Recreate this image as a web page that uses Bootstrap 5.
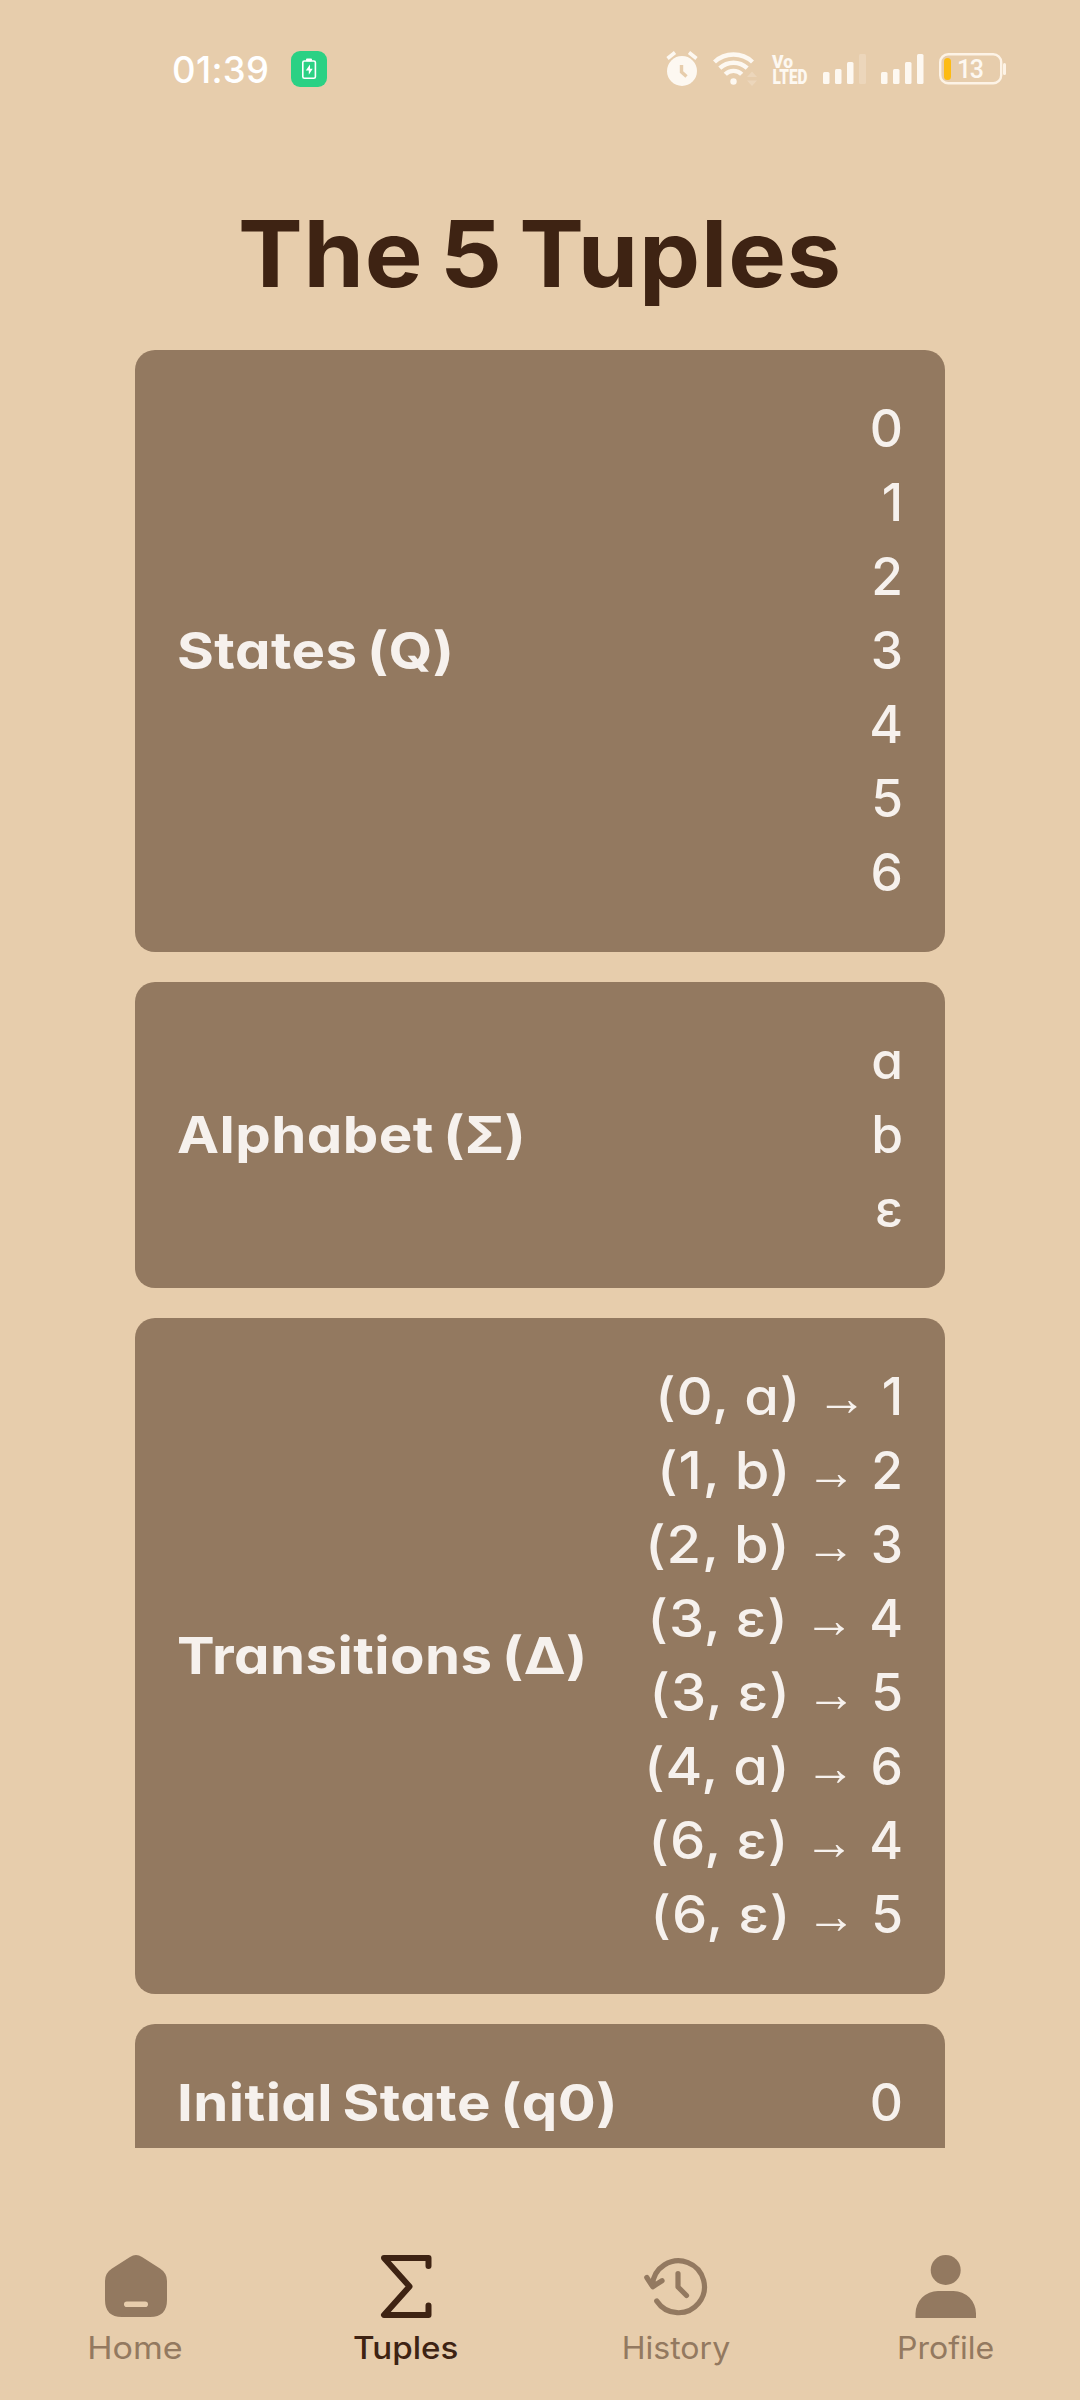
<!DOCTYPE html>
<html lang="en">
<head>
<meta charset="utf-8">
<meta name="viewport" content="width=device-width, initial-scale=1">
<title>The 5 Tuples</title>
<link href="https://cdn.jsdelivr.net/npm/bootstrap@5.3.0/dist/css/bootstrap.min.css" rel="stylesheet">
<style>
:root { --sand: #e7cdac; --brown: #937960; --dark: #3e2313; --cream: #f6f1ed; }
html, body { background: var(--sand); }
body { font-family: Inter, Roboto, sans-serif; font-feature-settings: "cv11"; }
.phone { width: 1080px; height: 2400px; background: var(--sand); }
.status-bar { height: 138px; padding: 33px 73px 33px 172px; color: #fff; }
.clock { font-size: 36.5px; font-weight: 500; line-height: 72px; padding-top: 2px; letter-spacing: .35px; width: 119px; font-feature-settings: normal; }
.status-bar svg { display: block; flex: none; overflow: visible; }
.status-icons { gap: 15px; }
.page-title { color: var(--dark); font-size: 92px; font-weight: 700; line-height: 136px; height: 212px; padding-top: 48px; word-spacing: -7px; letter-spacing: .8px; transform: scaleX(1.055); }
.tuple-list { width: 810px; height: 1798px; gap: 30px; }
.tuple-card { background: var(--brown); color: var(--cream); border-radius: 20px; padding: 41px 42px 43px; font-size: 51.5px; line-height: 74px; flex: none; }
.tuple-name { font-weight: 700; letter-spacing: .4px; word-spacing: -4px; transform: scaleX(1.095); transform-origin: left; }
.tuple-values { font-weight: 500; }
.pair { letter-spacing: .8px; word-spacing: -1px; margin-right: 15px; transform: scaleX(1.09); transform-origin: right; }
.arrow { font-family: "Liberation Sans", sans-serif; font-weight: 400; font-size: 50px; line-height: 0; width: 50px; margin-right: 15px; }
.tab-bar { height: 252px; padding-top: 105px; }
.tab-item { color: var(--brown); font-size: 30.7px; line-height: 40px; text-decoration: none; width: 270px; }
.tab-item span { margin-left: 1px; transform: scaleX(1.045); }
.tab-item .wide-label { transform: scaleX(1.11); margin-left: 0; }
.tab-item.active { color: var(--dark); font-weight: 500; }
.tab-item.active span { transform: scaleX(1.08); }
.tab-item svg { display: block; margin-bottom: 9px; margin-left: 2px; }
</style>
<script src="https://cdn.jsdelivr.net/npm/bootstrap@5.3.0/dist/js/bootstrap.bundle.min.js"></script>
</head>
<body>
<div class="phone d-flex flex-column overflow-hidden">

  <header class="status-bar d-flex align-items-center">
    <div class="clock">01:39</div>
    <svg width="36" height="36" viewBox="0 0 36 36"><rect width="36" height="36" rx="9" fill="#2bd184"/><rect x="11.8" y="10" width="12.6" height="17.3" rx="1.6" fill="none" stroke="#fff" stroke-width="1.6"/><rect x="15" y="7.6" width="6" height="2.6" rx="1" fill="#fff"/><path d="M19 13.600l-4.200 6h3v4.200l3.900-6h-2.700z" fill="#fff"/></svg>
    <div class="status-icons d-flex align-items-center ms-auto">
      <svg width="32" height="36" viewBox="0 0 32 36" fill="#fdf8f1"><circle cx="16" cy="20" r="15"/><path d="M1.500 7.500L9 1.500M30.500 7.500L23 1.500" stroke="#fdf8f1" stroke-width="3.600"/><path d="M15.500 14v7l5 4.500" fill="none" stroke="#e7cdac" stroke-width="3.400"/></svg>
      <svg width="44" height="36" viewBox="0 0 44 36" fill="none" stroke="#fdf8f1" stroke-width="4.400"><path d="M1.500 11A28 28 0 0 1 39.500 11M6.800 17.200A20 20 0 0 1 34.200 17.200M12.300 23.300A11.500 11.500 0 0 1 28.700 23.300"/><circle cx="20.500" cy="30.500" r="3.200" fill="#fdf8f1" stroke="none"/><path d="M34 26l5-5.500 5 5.500zM34 29.500l5 5.500 5-5.500z" fill="#ecd6bb" stroke="none"/></svg>
      <svg width="36" height="32" viewBox="0 0 36 32" fill="#fdf8f1" font-family="Roboto, sans-serif" font-weight="900"><text x="0" y="14.500" font-size="19" textLength="21" lengthAdjust="spacingAndGlyphs">Vo</text><text x="0.500" y="31" font-size="20" textLength="35" lengthAdjust="spacingAndGlyphs">LTED</text></svg>
      <svg width="43" height="30" viewBox="0 0 43 30" fill="#fdf8f1"><rect y="18" width="6.500" height="12" rx="1.500"/><rect x="12" y="15" width="6.500" height="15" rx="1.500"/><rect x="24" y="8" width="6.500" height="22" rx="1.500"/><rect x="36" width="7" height="30" rx="1.500" fill="#ecd6bb"/></svg>
      <svg width="43" height="30" viewBox="0 0 43 30" fill="#fdf8f1"><rect y="18" width="6.500" height="12" rx="1.500"/><rect x="12" y="15" width="6.500" height="15" rx="1.500"/><rect x="24" y="8" width="6.500" height="22" rx="1.500"/><rect x="36" width="6.500" height="30" rx="1.500"/></svg>
      <svg width="68" height="32" viewBox="0 0 68 32"><rect x="1.200" y="1.200" width="61" height="29" rx="8" fill="none" stroke="#fdf3e6" stroke-width="2.400"/><rect x="64" y="10" width="3" height="12" rx="1.500" fill="#fdf3e6"/><rect x="5" y="5" width="7" height="22" rx="3.500" fill="#fdbb12"/><text x="31.500" y="24.500" text-anchor="middle" font-family="Roboto, sans-serif" font-weight="500" font-size="25" textLength="27" fill="#fdf8f1">13</text></svg>
    </div>
  </header>

  <h1 class="page-title text-center m-0">The 5 Tuples</h1>

  <main class="tuple-list d-flex flex-column mx-auto overflow-hidden flex-shrink-0">
    <section class="tuple-card d-flex justify-content-between align-items-center">
      <div class="tuple-name">States (Q)</div>
      <div class="tuple-values text-end"><div>0</div><div>1</div><div>2</div><div>3</div><div>4</div><div>5</div><div>6</div></div>
    </section>
    <section class="tuple-card d-flex justify-content-between align-items-center">
      <div class="tuple-name">Alphabet (Σ)</div>
      <div class="tuple-values text-end"><div>a</div><div>b</div><div>ε</div></div>
    </section>
    <section class="tuple-card d-flex justify-content-between align-items-center">
      <div class="tuple-name">Transitions (Δ)</div>
      <div class="tuple-values">
        <div class="d-flex justify-content-end align-items-baseline"><span class="pair">(0, a)</span><span class="arrow">→</span><span>1</span></div>
        <div class="d-flex justify-content-end align-items-baseline"><span class="pair">(1, b)</span><span class="arrow">→</span><span>2</span></div>
        <div class="d-flex justify-content-end align-items-baseline"><span class="pair">(2, b)</span><span class="arrow">→</span><span>3</span></div>
        <div class="d-flex justify-content-end align-items-baseline"><span class="pair">(3, ε)</span><span class="arrow">→</span><span>4</span></div>
        <div class="d-flex justify-content-end align-items-baseline"><span class="pair">(3, ε)</span><span class="arrow">→</span><span>5</span></div>
        <div class="d-flex justify-content-end align-items-baseline"><span class="pair">(4, a)</span><span class="arrow">→</span><span>6</span></div>
        <div class="d-flex justify-content-end align-items-baseline"><span class="pair">(6, ε)</span><span class="arrow">→</span><span>4</span></div>
        <div class="d-flex justify-content-end align-items-baseline"><span class="pair">(6, ε)</span><span class="arrow">→</span><span>5</span></div>
      </div>
    </section>
    <section class="tuple-card d-flex justify-content-between align-items-center">
      <div class="tuple-name">Initial State (q0)</div>
      <div class="tuple-values text-end">0</div>
    </section>
  </main>

  <nav class="tab-bar d-flex flex-shrink-0">
    <a class="tab-item d-flex flex-column align-items-center" href="#">
      <svg width="64" height="66" viewBox="0 0 64 66"><path d="M26 4Q32 0 38 4L56 15.500Q63 20 63 28V47Q63 64 46 64H18Q1 64 1 47V28Q1 20 8 15.500Z" fill="#937960"/><rect x="20" y="48.500" width="24" height="5.600" rx="2.800" fill="#e7cdac"/></svg>
      <span class="wide-label">Home</span>
    </a>
    <a class="tab-item active d-flex flex-column align-items-center" href="#">
      <svg width="64" height="66" viewBox="0 0 64 66" fill="none" stroke="#3e2313" stroke-width="6" stroke-linecap="round" stroke-linejoin="round"><path d="M54.500 13V5H10L35.500 33.500L10 62H54.500V52.500"/></svg>
      <span>Tuples</span>
    </a>
    <a class="tab-item d-flex flex-column align-items-center" href="#">
      <svg width="64" height="66" viewBox="0 0 64 66" fill="none" stroke="#937960" stroke-width="5.200" stroke-linecap="round" stroke-linejoin="round"><path d="M12.700 48A26 26 0 1 0 8.500 32M2.800 24.500L8.700 33.700L18 27.700M34 20.500V34L42.500 42.500"/></svg>
      <span>History</span>
    </a>
    <a class="tab-item d-flex flex-column align-items-center" href="#">
      <svg width="64" height="66" viewBox="0 0 64 66" fill="#937960"><circle cx="31.700" cy="17" r="15"/><path d="M1.500 65V60.500A22.500 22.500 0 0 1 24 38H39.500A22.500 22.500 0 0 1 62 60.500V65Z"/></svg>
      <span>Profile</span>
    </a>
  </nav>
</div>
</body>
</html>
